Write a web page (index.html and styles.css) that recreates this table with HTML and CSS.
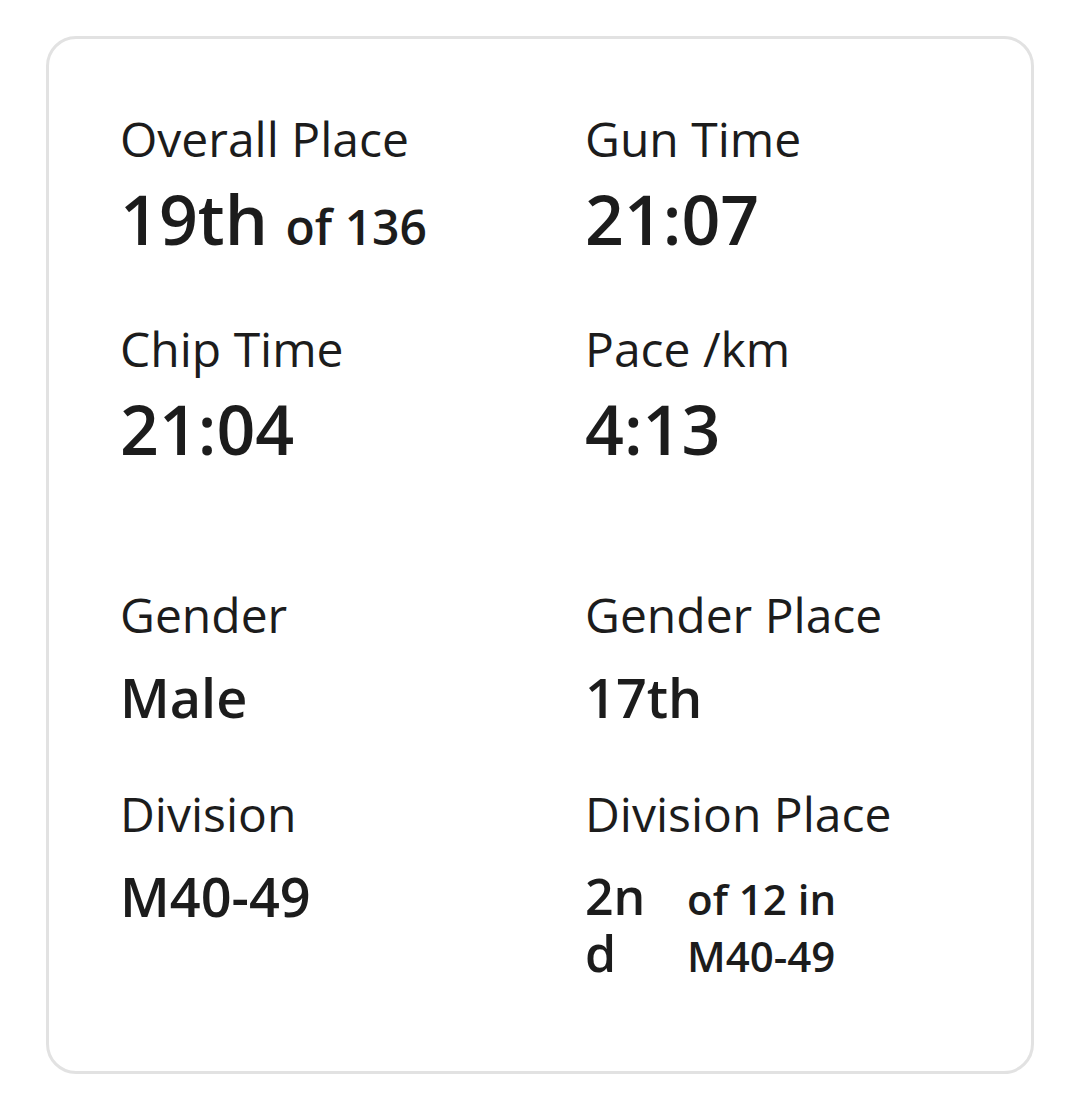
FILE: index.html
```html
<!DOCTYPE html>
<html lang="en">
<head>
<meta charset="utf-8">
<title>Race result</title>
<link rel="stylesheet" href="styles.css">
</head>
<body>
  <div class="card">
    <div class="grid times">
      <div class="item">
        <div class="label">Overall Place</div>
        <div class="value big">19th <span class="of">of 136</span></div>
      </div>
      <div class="item">
        <div class="label">Gun Time</div>
        <div class="value big">21:07</div>
      </div>
      <div class="item">
        <div class="label">Chip Time</div>
        <div class="value big">21:04</div>
      </div>
      <div class="item">
        <div class="label">Pace /km</div>
        <div class="value big">4:13</div>
      </div>
    </div>
    <div class="grid places">
      <div class="item">
        <div class="label">Gender</div>
        <div class="value mid">Male</div>
      </div>
      <div class="item">
        <div class="label">Gender Place</div>
        <div class="value mid">17th</div>
      </div>
      <div class="item">
        <div class="label">Division</div>
        <div class="value mid">M40-49</div>
      </div>
      <div class="item">
        <div class="label">Division Place</div>
        <div class="value split">
          <span class="num">2nd</span>
          <span class="sub">of 12 in M40-49</span>
        </div>
      </div>
    </div>
  </div>
</body>
</html>
```

FILE: styles.css
```css
html, body {
  margin: 0;
  padding: 0;
  background: #ffffff;
}

body {
  font-family: "Open Sans", "Noto Sans", sans-serif;
  color: #1c1c1c;
  padding: 36px 0 0 46px;
}

.card {
  border: 3px solid #e2e2e2;
  border-radius: 30px;
  padding: 68px 0 87px 71px;
  box-sizing: content-box;
  width: 911px;
}

.grid {
  display: grid;
  grid-template-columns: 465px 1fr;
}

.times {
  row-gap: 46px;
}

.places {
  margin-top: 110px;
  row-gap: 53px;
}

.label {
  font-size: 48px;
  line-height: 64px;
  font-weight: 400;
}

.value {
  font-weight: 600;
}

.big {
  font-size: 68px;
  line-height: 88px;
  margin-top: 4px;
}

.big .of {
  font-size: 48px;
}

.mid {
  font-size: 54px;
  line-height: 64px;
  margin-top: 18px;
}

.split {
  display: flex;
  align-items: baseline;
  gap: 30px;
  margin-top: 22px;
}

.split .num {
  font-size: 50px;
  line-height: 57px;
  width: 72px;
  overflow-wrap: anywhere;
  word-break: break-all;
}

.split .sub {
  font-size: 42px;
  line-height: 57px;
  width: 180px;
}
```
